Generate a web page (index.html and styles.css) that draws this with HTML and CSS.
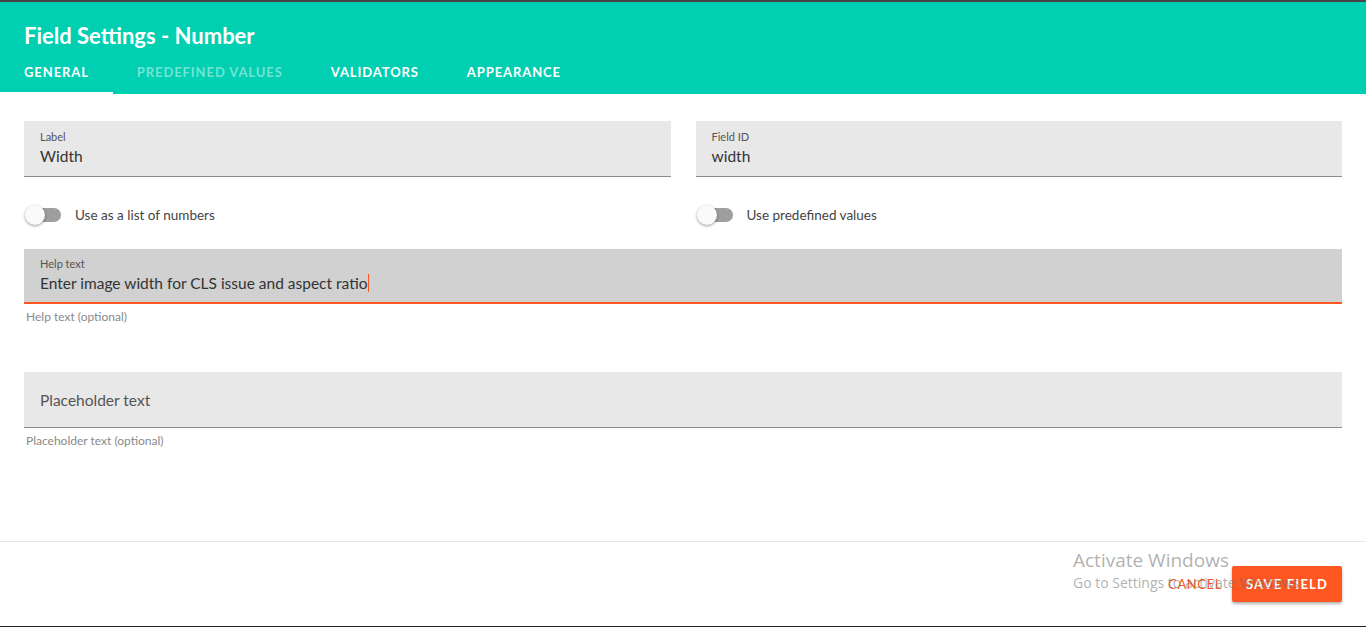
FILE: index.html
```html
<!DOCTYPE html>
<html lang="en">
<head>
    <meta charset="UTF-8">
    <title>Field Settings - Number</title>
    <link rel="stylesheet" href="styles.css">
</head>
<body>
    <div class="dialog">
        <div class="dialog-header">
            <h1 class="dialog-title">Field Settings - Number</h1>
            <div class="tabs">
                <span class="tab active">General</span>
                <span class="tab disabled">Predefined values</span>
                <span class="tab">Validators</span>
                <span class="tab">Appearance</span>
            </div>
        </div>

        <div class="dialog-body">
            <div class="row two-cols">
                <div class="field">
                    <label class="field-label">Label</label>
                    <div class="field-value">Width</div>
                </div>
                <div class="field">
                    <label class="field-label">Field ID</label>
                    <div class="field-value">width</div>
                </div>
            </div>

            <div class="row two-cols switches">
                <div class="switch-row">
                    <span class="switch"><span class="knob"></span></span>
                    <span class="switch-label">Use as a list of numbers</span>
                </div>
                <div class="switch-row">
                    <span class="switch"><span class="knob"></span></span>
                    <span class="switch-label">Use predefined values</span>
                </div>
            </div>

            <!-- focused field -->
            <div class="field focused">
                <label class="field-label">Help text</label>
                <div class="field-value">Enter image width for CLS issue and aspect ratio<span class="caret"></span></div>
            </div>
            <div class="helper">Help text (optional)</div>

            <div class="field empty">
                <div class="field-placeholder">Placeholder text</div>
            </div>
            <div class="helper">Placeholder text (optional)</div>
        </div>

        <div class="dialog-footer">
            <button class="btn btn-text">Cancel</button>
            <button class="btn btn-primary">Save field</button>
        </div>
    </div>

    <div class="watermark">
        <div class="wm-title">Activate Windows</div>
        <div class="wm-sub">Go to Settings to activate Windows.</div>
    </div>
</body>
</html>
```

FILE: styles.css
```css
/* Main Styles */
body {
    margin: 0;
    background: #fff;
    font-family: "Lato", "Liberation Sans", sans-serif;
    color: #333;
}
.dialog {
    height: 627px;
    display: flex;
    flex-direction: column;
    border-top: 2px solid #454545;
    border-bottom: 1px solid #222;
    box-sizing: border-box;
}
.dialog-header {
    background-color: #00cfb1;
    color: #fff;
    height: 92px;
    display: flex;
    flex-direction: column;
}
.dialog-title {
    margin: 0;
    padding: 22px 24px 0;
    height: 22px;
    font-size: 22px;
    line-height: 24px;
    font-weight: 700;
}
.tabs {
    display: flex;
    margin-top: auto;
}
.tab {
    padding: 6px 24px 0;
    height: 40px;
    line-height: 40px;
    font-size: 13px;
    font-weight: 700;
    letter-spacing: 0.9px;
    text-transform: uppercase;
    border-bottom: 2px solid transparent;
}
.tab.active {
    border-bottom-color: #fff;
}
.tab.disabled {
    color: rgba(255, 255, 255, 0.45);
}
.dialog-body {
    flex: 1;
    padding: 27px 24px 0;
}
.two-cols {
    display: grid;
    grid-template-columns: 1fr 1fr;
    column-gap: 25px;
}
.field {
    background-color: #e8e8e8;
    border-bottom: 1px solid #8a8a8a;
    height: 55px;
    padding: 0 16px;
    display: flex;
    flex-direction: column;
    justify-content: center;
}
.field-label {
    font-size: 11px;
    color: #555;
    line-height: 14px;
}
.field-value {
    font-size: 15.5px;
    color: #333;
    line-height: 22px;
    margin-top: 1px;
}
.field-placeholder {
    font-size: 15.5px;
    color: #555;
}
.field.focused {
    background-color: #d1d1d1;
    border-bottom: 2px solid #ff5722;
    height: 53px;
}
.caret {
    display: inline-block;
    width: 1px;
    height: 18px;
    background: #ff5722;
    vertical-align: -3px;
}
.switches {
    height: 72px;
    padding-top: 4px;
    box-sizing: border-box;
    align-items: center;
}
.switch-row {
    display: flex;
    align-items: center;
}
.switch {
    position: relative;
    width: 34px;
    height: 14px;
    margin-left: 3px;
    border-radius: 7px;
    background-color: #9e9e9e;
}
.knob {
    position: absolute;
    left: -2px;
    top: -3px;
    width: 20px;
    height: 20px;
    border-radius: 50%;
    background: #fafafa;
    box-shadow: 0 1px 3px rgba(0, 0, 0, 0.4);
}
.switch-label {
    margin-left: 14px;
    font-size: 13.5px;
    color: #444;
}
.helper {
    font-size: 12px;
    color: #8a8a8a;
    padding: 5px 2px 0;
    height: 68px;
    box-sizing: border-box;
}
.dialog-footer {
    height: 84px;
    border-top: 1px solid #e6e6e6;
    display: flex;
    justify-content: flex-end;
    align-items: center;
    gap: 10px;
    padding: 0 24px 0;
}
.btn {
    font-family: inherit;
    font-size: 13px;
    font-weight: 700;
    letter-spacing: 1.2px;
    text-transform: uppercase;
    border: none;
    cursor: pointer;
}
.btn-text {
    background: none;
    color: #ff5722;
    font-weight: 400;
    letter-spacing: 0.6px;
    padding: 0;
}
.btn-primary {
    background-color: #ff5722;
    color: #fff;
    height: 36px;
    width: 110px;
    border-radius: 2px;
    box-shadow: 0 2px 3px rgba(0, 0, 0, 0.3);
}
.watermark {
    position: absolute;
    left: 1073px;
    top: 548px;
    color: rgba(110, 110, 110, 0.55);
    font-family: "Open Sans", sans-serif;
}
.wm-title {
    font-size: 19px;
    line-height: 24px;
}
.wm-sub {
    font-size: 14px;
    line-height: 22px;
}
```
